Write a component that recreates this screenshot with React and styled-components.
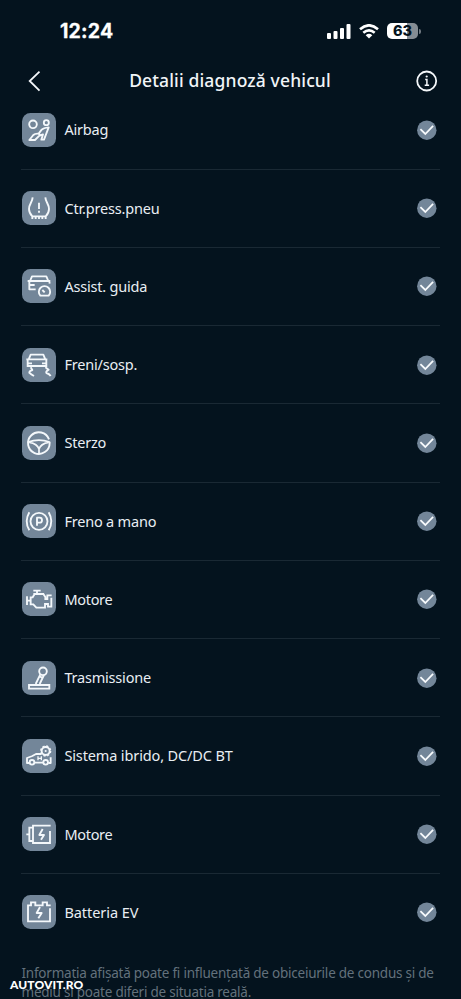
import React from "react";
import styled, { createGlobalStyle } from "styled-components";

const GlobalStyle = createGlobalStyle`
  * { box-sizing: border-box; }
  html, body { margin: 0; background: #04131e; overflow: hidden; }
`;

const Screen = styled.main`
  position: relative;
  width: 461px;
  height: 999px;
  overflow: hidden;
  background: #04131e;
  color: #e9eef3;
  font-family: "Noto Sans", sans-serif;
`;

const StatusBar = styled.div`
  display: flex;
  align-items: center;
  justify-content: space-between;
  height: 62px;
  padding: 0 40px 0 60px;
`;

const Clock = styled.span`
  font: 700 19.5px/24px Inter, sans-serif;
  letter-spacing: 0.2px;
  color: #fff;
  -webkit-text-stroke: 0.3px #fff;
`;

const StatusIcons = styled.div`
  display: flex;
  align-items: center;
  gap: 8px;
`;

const Battery = styled.div`
  display: flex;
  align-items: center;
  gap: 1px;
`;

const BatteryBody = styled.div`
  width: 31px;
  height: 16px;
  border-radius: 5px;
  background: linear-gradient(90deg, #fff 63%, #858d94 63%);
  color: #04131e;
  font: 800 14.5px/16px Inter, sans-serif;
  text-align: center;
`;

const BatteryTip = styled.div`
  width: 2px;
  height: 5px;
  border-radius: 0 2px 2px 0;
  background: #717a82;
`;

const Header = styled.header`
  display: grid;
  grid-template-columns: 24px 1fr 24px;
  align-items: center;
  height: 29.25px;
  padding: 6px 22.5px 0 21.5px;
`;

const Title = styled.h1`
  margin: 0;
  padding-bottom: 2px;
  color: #f1f5f8;
  font-size: 17.5px;
  line-height: 24px;
  font-weight: 500;
  letter-spacing: 0.14px;
  text-align: center;
  white-space: nowrap;
`;

const HeaderIcon = styled.svg`
  display: block;
  width: 24px;
  height: 24px;
  fill: none;
  stroke: #f4f7fa;
`;

const List = styled.ul`
  margin: 0;
  padding: 0 21px;
  list-style: none;
`;

const Row = styled.li`
  display: flex;
  align-items: center;
  height: 78.25px;
  padding-right: 3.5px;
  border-bottom: 1px solid ${(p) => (p.$last ? "transparent" : "#1a2934")};
`;

const Tile = styled.svg`
  flex: none;
  width: 34px;
  height: 34px;
  margin-left: 0.6px;
  border-radius: 8.5px;
  background: #738699;
  fill: none;
  stroke: #f4f8fb;
  stroke-width: 5.6;
  stroke-linejoin: round;
`;

const Label = styled.span`
  flex: 1;
  margin: 0 0 1px 8.8px;
  font-size: 14.5px;
  line-height: 20px;
  letter-spacing: ${(p) => p.$spacing}px;
  white-space: nowrap;
`;

const Check = styled.svg`
  flex: none;
  width: 20px;
  height: 20px;
`;

const Note = styled.p`
  margin: 12px 0 0;
  padding-left: 21.5px;
  color: #63717c;
  font-size: 13.5px;
  line-height: 19px;
  letter-spacing: -0.23px;
  white-space: nowrap;
`;

const Watermark = styled.div`
  position: absolute;
  left: 10px;
  bottom: 6px;
  color: #fff;
  font: 900 12px/16px Lato, sans-serif;
  letter-spacing: 0.1px;
`;

const AirbagIcon = () => (
  <>
    <circle cx="33" cy="34" r="11.5" />
    <circle cx="73" cy="29" r="7.5" />
    <path d="M22 81 L34 66 Q39 61 50 62 L59 50 Q64 45 80 43 L66 80 L58 80 L63 64 L52 68 L39 81 Z M50 62 L57 68" />
  </>
);

const TyreIcon = () => (
  <>
    <path d="M32 19 C31 34 21 39 21 54 Q21 66 31 76 H71 Q81 66 81 54 C81 39 71 34 70 19 M31 75 V84 M41 77 V84 M51 77 V84 M61 77 V84 M71 75 V84" />
    <path d="M51 35 V54 M51 59 V65" />
  </>
);

const AssistIcon = () => (
  <>
    <path d="M17 36 H24 L30 22 H73 L79 36 H85 M22 36 H82 L83 44 M22 36 V61 H41 M24 48 H38" />
    <path d="M55 80 A17 17 0 1 1 80 80 Z M68 70 L61 63" />
  </>
);

const BrakeIcon = () => (
  <>
    <path d="M13 34 H20 L26 20 H64 L70 34 H76 M17 34 H73 V57 M17 34 V57 M18 46 H30 M60 46 H72 M18 54 H72" />
    <path d="M26 58 L31 66 Q22 69 22 74 Q28 79 36 84 M70 58 L80 65 Q71 70 73 75 Q82 77 86 84" />
  </>
);

const WheelIcon = () => (
  <>
    <path d="M81 40 A32.5 32.5 0 1 0 83 51 V47" />
    <path d="M18 48 Q51 37 83 48 M22 49 Q46 53 51 69 Q56 53 80 49 M51 67 V83" strokeWidth="5.2" />
  </>
);

const ParkingIcon = () => (
  <>
    <circle cx="51" cy="52" r="25.5" />
    <path d="M45 65 V41 H53 Q60 41 60 48.5 Q60 56 53 56 H45" />
    <path d="M22 25 Q6 52 22 79 M80 25 Q96 52 80 79" />
  </>
);

const EngineIcon = () => (
  <>
    <path
      d="M34 26 H56 M45 26 V36 M34 36 H64 L70 45 V51 H76 V40 H89 M88 47 V74 H78 V66 H69 V77 H43 L34 67 H26 V46 H32 L38 36 M15 43 V69 M15 56 H26"
      strokeLinejoin="miter"
    />
  </>
);

const GearIcon = () => (
  <>
    <circle cx="63" cy="31" r="11.5" />
    <path d="M55 40 L41 69 M66 42 L53 69 M54 47 L63 51 M21 72 H82 V83 H21 Z" strokeLinejoin="miter" />
  </>
);

const HybridIcon = () => (
  <>
    <path d="M22 72 H15 V57 L31 51 L42 45 H58 M38 71 H63 M79 72 H86 V55" />
    <circle cx="30" cy="70" r="7" />
    <circle cx="71" cy="70" r="7" />
    <path d="M48 52 V64 M58 52 V64 M48 58 H58" strokeWidth="4" />
    <circle cx="71" cy="36" r="12" />
    <circle cx="71" cy="36" r="15" strokeDasharray="6.5 5.28" strokeWidth="4" />
    <circle cx="71" cy="36" r="3.2" fill="#f4f8fb" stroke="none" />
  </>
);

const MotorIcon = () => (
  <>
    <path d="M86 26 H33 V78 H84 V42 M33 32 H22 V72 H33 M13 52 H22" strokeLinejoin="miter" />
    <path d="M62 36 L52 54 H66 L57 68" />
  </>
);

const BatteryIcon = () => (
  <>
    <path d="M84 40 V79 H18 V31 H27 V22 H40 V31 H62 V22 H75 V31 H86" strokeLinejoin="miter" />
    <path d="M54 36 L44 54 H59 L49 70" />
  </>
);

const systems = [
  { label: "Airbag", Icon: AirbagIcon, spacing: -0.2 },
  { label: "Ctr.press.pneu", Icon: TyreIcon, spacing: -0.17 },
  { label: "Assist. guida", Icon: AssistIcon, spacing: -0.2 },
  { label: "Freni/sosp.", Icon: BrakeIcon, spacing: -0.2 },
  { label: "Sterzo", Icon: WheelIcon, spacing: -0.2 },
  { label: "Freno a mano", Icon: ParkingIcon, spacing: -0.2 },
  { label: "Motore", Icon: EngineIcon, spacing: -0.3 },
  { label: "Trasmissione", Icon: GearIcon, spacing: -0.2 },
  { label: "Sistema ibrido, DC/DC BT", Icon: HybridIcon, spacing: -0.13 },
  { label: "Motore", Icon: MotorIcon, spacing: -0.3 },
  { label: "Batteria EV", Icon: BatteryIcon, spacing: -0.05 },
];

export default function App() {
  return (
    <Screen>
      <GlobalStyle />
      <StatusBar>
        <Clock>12:24</Clock>
        <StatusIcons>
          <svg width="24" height="15" viewBox="0 0 24 15" fill="#fff">
            <rect x="0" y="9" width="4" height="6" rx="1" />
            <rect x="6.5" y="7" width="4" height="8" rx="1" />
            <rect x="13" y="4" width="4" height="11" rx="1" />
            <rect x="19.5" y="0" width="4" height="15" rx="1" />
          </svg>
          <svg width="20" height="15" viewBox="0 0 20 15" fill="none" stroke="#fff" strokeWidth="2.6">
            <path d="M1 5.2 Q10 -2.6 19 5.2 M4.3 8.8 Q10 4 15.7 8.8" />
            <path d="M10 14.5 L6.7 11.2 Q10 8.5 13.3 11.2 Z" fill="#fff" stroke="none" />
          </svg>
          <Battery>
            <BatteryBody>63</BatteryBody>
            <BatteryTip />
          </Battery>
        </StatusIcons>
      </StatusBar>
      <Header>
        <HeaderIcon viewBox="0 0 24 24" strokeWidth="1.8">
          <path d="M17.5 2.6 L7.7 12 L17.5 21.6" />
        </HeaderIcon>
        <Title>Detalii diagnoză vehicul</Title>
        <HeaderIcon viewBox="0 0 24 24" strokeWidth="1.8">
          <circle cx="11.7" cy="12" r="9.5" />
          <path d="M10.2 10.4 H11.9 V16.3 M9.7 16.3 H14.1" strokeWidth="1.5" />
          <circle cx="11.7" cy="7.5" r="1.1" fill="#f4f7fa" stroke="none" />
        </HeaderIcon>
      </Header>
      <List>
        {systems.map(({ label, Icon, spacing }, i) => (
          <Row key={i} $last={i === systems.length - 1}>
            <Tile viewBox="0 0 102 102">
              <Icon />
            </Tile>
            <Label $spacing={spacing}>{label}</Label>
            <Check viewBox="0 0 20 20">
              <circle cx="9.8" cy="10.2" r="9.7" fill="#738699" />
              <path d="M3.4 9.2 L8.3 14 L16.1 5.9" fill="none" stroke="#f8fbfd" strokeWidth="1.8" />
            </Check>
          </Row>
        ))}
      </List>
      <Note>
        Informația afișată poate fi influențată de obiceiurile de condus și de
        <br />
        mediu și poate diferi de situația reală.
      </Note>
      <Watermark>AUTOVIT.RO</Watermark>
    </Screen>
  );
}
